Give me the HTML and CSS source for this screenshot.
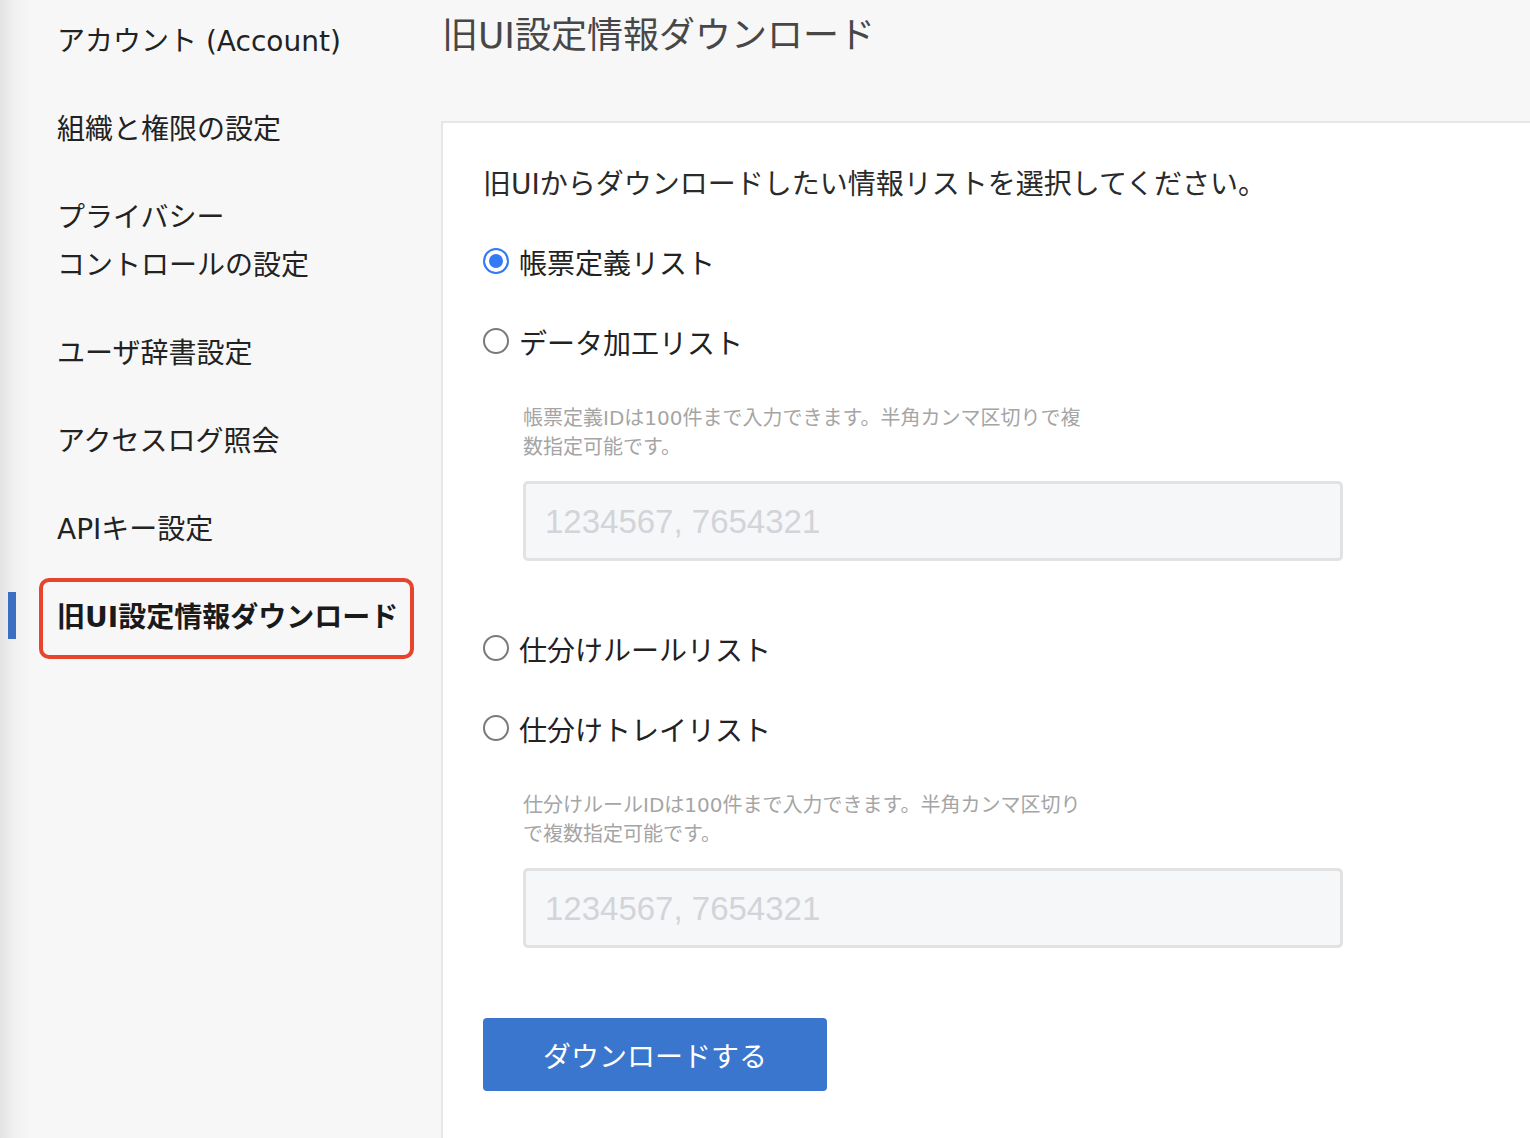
FILE: index.html
```html
<!DOCTYPE html>
<html lang="ja">
<head>
<meta charset="utf-8">
<title>旧UI設定情報ダウンロード</title>
<link rel="stylesheet" href="styles.css">
</head>
<body>
<div class="layout">
  <nav class="sidebar">
    <a class="nav-item">アカウント (Account)</a>
    <a class="nav-item">組織と権限の設定</a>
    <a class="nav-item">プライバシー<br>コントロールの設定</a>
    <a class="nav-item">ユーザ辞書設定</a>
    <a class="nav-item">アクセスログ照会</a>
    <a class="nav-item">APIキー設定</a>
    <a class="nav-item active">旧UI設定情報ダウンロード</a>
  </nav>
  <main class="main">
    <h1 class="title">旧UI設定情報ダウンロード</h1>
    <section class="card">
      <p class="lead">旧UIからダウンロードしたい情報リストを選択してください。</p>
      <div class="group">
        <label class="opt"><input type="radio" name="list" checked><span>帳票定義リスト</span></label>
        <label class="opt"><input type="radio" name="list"><span>データ加工リスト</span></label>
        <div class="field">
          <p class="help">帳票定義IDは100件まで入力できます。半角カンマ区切りで複数指定可能です。</p>
          <input class="ids" type="text" placeholder="1234567, 7654321">
        </div>
      </div>
      <div class="group">
        <label class="opt"><input type="radio" name="list"><span>仕分けルールリスト</span></label>
        <label class="opt"><input type="radio" name="list"><span>仕分けトレイリスト</span></label>
        <div class="field">
          <p class="help">仕分けルールIDは100件まで入力できます。半角カンマ区切りで複数指定可能です。</p>
          <input class="ids" type="text" placeholder="1234567, 7654321">
        </div>
      </div>
      <button class="btn" type="button">ダウンロードする</button>
    </section>
  </main>
</div>
</body>
</html>
```
FILE: styles.css
```css
*, *::before, *::after { box-sizing: border-box; }
html, body {
  margin: 0;
  padding: 0;
  height: 100%;
  overflow: hidden;
}
body {
  font-family: "DejaVu Sans", "Noto Sans CJK JP", sans-serif;
  color: #222;
  background: #f7f7f7;
}
.layout {
  display: flex;
  height: 100vh;
}
.sidebar {
  width: 441px;
  flex: none;
  display: flex;
  flex-direction: column;
  background: linear-gradient(to right, #e3e3e3 0, #f0f0f0 14px, #f7f7f7 32px);
}
.nav-item {
  position: relative;
  display: block;
  padding: 18px 0 22px 57px;
  font-size: 28px;
  line-height: 48px;
  color: #222;
  text-decoration: none;
}
.nav-item.active {
  font-weight: 700;
  color: #1a1a1a;
}
.nav-item.active::before {
  content: "";
  position: absolute;
  left: 8px;
  top: 16px;
  width: 8px;
  height: 47px;
  background: #3a6fc4;
}
.nav-item.active::after {
  content: "";
  position: absolute;
  left: 39px;
  top: 2px;
  width: 375px;
  height: 81px;
  border: 4px solid #e8432b;
  border-radius: 10px;
}
.main {
  flex: 1;
  display: flex;
  flex-direction: column;
  padding-top: 11px;
  min-width: 0;
}
.title {
  margin: 0 0 60px 1px;
  font-size: 36px;
  line-height: 50px;
  font-weight: 400;
  color: #474747;
}
.card {
  flex: 1;
  background: #fff;
  border-top: 2px solid #e6e6e6;
  border-left: 2px solid #e6e6e6;
  padding: 38px 40px 40px 40px;
}
.lead {
  margin: 0 0 29px;
  font-size: 28px;
  line-height: 48px;
  color: #2a2a2a;
}
.group {
  display: flex;
  flex-direction: column;
}
.group + .group {
  margin-top: 64px;
}
.opt {
  display: flex;
  align-items: center;
  height: 48px;
  font-size: 28px;
  color: #222;
}
.opt + .opt {
  margin-top: 32px;
}
.opt input {
  appearance: none;
  -webkit-appearance: none;
  margin: 0 10px 0 0;
  width: 26px;
  height: 26px;
  border-radius: 50%;
  border: 2px solid #7a7a7a;
  background: #fff;
  flex: none;
  position: relative;
  top: -1px;
}
.opt input:checked {
  border-color: #3479f5;
  background: #3479f5;
  box-shadow: inset 0 0 0 4px #fff;
}
.field {
  margin-top: 38px;
  padding-left: 40px;
}
.help {
  margin: 0 0 19px;
  width: 566px;
  font-size: 20px;
  line-height: 29px;
  color: #a5a5a5;
}
.ids {
  display: block;
  width: 820px;
  height: 80px;
  border: 3px solid #e2e2e2;
  border-radius: 5px;
  background: #f6f7f9;
  padding: 2px 0 0 19px;
  font-family: "Liberation Sans", Arial, sans-serif;
  font-size: 33px;
  color: #333;
  outline: none;
}
.ids::placeholder {
  color: #d2d4d9;
}
.btn {
  display: block;
  margin-top: 70px;
  width: 344px;
  height: 73px;
  border: none;
  border-radius: 4px;
  background: #3a76cd;
  color: #fff;
  font-family: "Noto Sans CJK JP", sans-serif;
  font-size: 28px;
  padding: 0;
}
```
